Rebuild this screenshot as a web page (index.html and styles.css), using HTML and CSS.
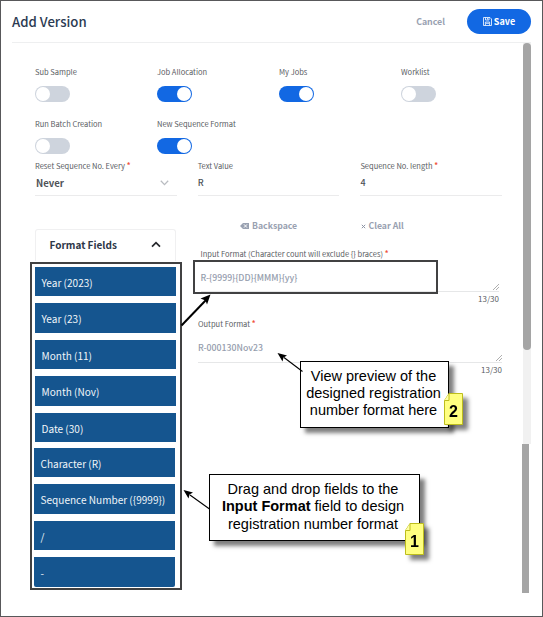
FILE: index.html
```
<!DOCTYPE html>
<html lang="en">
<head>
<meta charset="utf-8">
<title>Add Version</title>
<link rel="stylesheet" href="styles.css">
</head>
<body>
<div class="page">
  <header class="header">
    <h1 class="title">Add Version</h1>
    <div class="actions">
      <button class="cancel">Cancel</button>
      <button class="save">
        <svg class="save-icon" viewBox="0 0 9 9"><path d="M.5.5H7L8.5 2V8.5H.5ZM2.5.5V3H6V.5M4.5 1V2.5M2.4 8.4V5H6.6V8.4M3 6.3H6" fill="none" stroke="#fff" stroke-width=".8"/></svg>
        <span>Save</span>
      </button>
    </div>
  </header>

  <div class="body">
    <main class="form">
      <section class="toggles">
        <div class="toggle"><span class="label">Sub Sample</span><i class="switch"></i></div>
        <div class="toggle"><span class="label">Job Allocation</span><i class="switch on"></i></div>
        <div class="toggle"><span class="label">My Jobs</span><i class="switch on"></i></div>
        <div class="toggle"><span class="label">Worklist</span><i class="switch"></i></div>
        <div class="toggle"><span class="label">Run Batch Creation</span><i class="switch"></i></div>
        <div class="toggle"><span class="label">New Sequence Format</span><i class="switch on"></i></div>
      </section>

      <section class="fields">
        <div class="field">
          <span class="label">Reset Sequence No. Every <b class="req">*</b></span>
          <div class="value select"><span>Never</span>
            <svg class="chevron" viewBox="0 0 9 6"><path d="M.8.8 4.5 4.6 8.2.8" fill="none" stroke="#b9bcc1" stroke-width="1.3"/></svg>
          </div>
        </div>
        <div class="field">
          <span class="label">Text Value</span>
          <div class="value plain">R</div>
        </div>
        <div class="field">
          <span class="label">Sequence No. length <b class="req">*</b></span>
          <div class="value plain">4</div>
        </div>
      </section>

      <section class="designer">
        <aside class="palette">
          <div class="palette-head"><span>Format Fields</span>
            <svg class="caret" viewBox="0 0 10 7"><path d="M1 5.7 5 1.6 9 5.7" fill="none" stroke="#26282c" stroke-width="1.7"/></svg>
          </div>
          <ul class="palette-list">
            <li>Year (2023)</li>
            <li>Year (23)</li>
            <li>Month (11)</li>
            <li>Month (Nov)</li>
            <li>Date (30)</li>
            <li class="shifted first">Character (R)</li>
            <li class="shifted">Sequence Number ({9999})</li>
            <li class="shifted">/</li>
            <li class="shifted last">-</li>
          </ul>
        </aside>

        <div class="formats">
          <div class="tools">
            <span class="tool back">
              <svg class="back-icon" viewBox="0 0 9 6"><path d="M3 0H9V6H3L0 3Z" fill="#99a1b1"/><path d="M4 1.4 7 4.6M7 1.4 4 4.6" stroke="#fff" stroke-width="1"/></svg>
              <span>Backspace</span>
            </span>
            <span class="tool clear">
              <svg class="x-icon" viewBox="0 0 5 5"><path d="M.8.8 4.2 4.2M4.2.8.8 4.2" stroke="#8b93a4" stroke-width="1"/></svg>
              <span>Clear All</span>
            </span>
          </div>
          <div class="format input">
            <span class="label wide">Input Format (Character count will exclude {} braces) <b class="req">*</b></span>
            <div class="area"><span class="code">R-{9999}{DD}{MMM}{yy}</span>
              <svg class="grip" viewBox="0 0 6 6"><path d="M0 6 6 0M3 6 6 3" stroke="#8d8d8d" stroke-width=".7"/></svg>
            </div>
            <span class="count">13/30</span>
          </div>
          <div class="format output">
            <span class="label">Output Format <b class="req">*</b></span>
            <div class="area"><span class="code">R-000130Nov23</span>
              <svg class="grip" viewBox="0 0 6 6"><path d="M0 6 6 0M3 6 6 3" stroke="#8d8d8d" stroke-width=".7"/></svg>
            </div>
            <span class="count">13/30</span>
          </div>
        </div>
      </section>
    </main>
    <div class="scroll"><div class="track"><i class="thumb"></i></div><i class="thumb-lower"></i></div>
  </div>

  <div class="outline outline-fields"></div>
  <div class="outline outline-input"></div>
  <div class="callout callout-preview"><p>View preview of the</p><p>designed registration</p><p>number format here</p></div>
  <div class="callout callout-drag"><p>Drag and drop fields to the</p><p><b>Input Format</b> field to design</p><p>registration number format</p></div>
  <svg class="arrows" viewBox="0 0 543 617">
    <g stroke="#000" fill="none">
      <path d="M181.500 325.500 206 300" stroke-width="2"/>
      <path d="M302.500 371.500 284 357.500M209.500 509 190 495" stroke-width="1.1"/>
    </g>
    <path d="M210.500 294.500 207 304.500 205.500 300.500 200.500 298.500Z"/>
    <path d="M277.500 353 287 355.500 283.500 357.500 282.500 361.500Z"/>
    <path d="M183.500 490 193 492.500 189.500 494.500 188.500 498.500Z"/>
  </svg>
  <div class="note note-two"><svg viewBox="0 0 19 32"><path d="M5 .5H18.500V31.500H.5V7.500L5 .5Z" fill="#ffff80" stroke="#bdbd1c"/><path d="M5 .5V7.500H.5" fill="#ffffa8" stroke="#bdbd1c"/></svg><span>2</span></div>
  <div class="note note-one"><svg viewBox="0 0 19 32"><path d="M5 .5H18.500V31.500H.5V7.500L5 .5Z" fill="#ffff80" stroke="#bdbd1c"/><path d="M5 .5V7.500H.5" fill="#ffffa8" stroke="#bdbd1c"/></svg><span>1</span></div>
</div>
</body>
</html>
```
FILE: styles.css
```
* { box-sizing: border-box; }
body { margin: 0; background: #fff; }
h1, p, ul { margin: 0; padding: 0; }
button { border: 0; padding: 0; background: none; font-family: inherit; }
svg { display: block; flex: none; }
.page {
  position: relative;
  width: 543px;
  height: 617px;
  overflow: hidden;
  border: 1px solid #58585a;
  font-family: "Noto Sans CJK SC", "Open Sans", sans-serif;
  color: #5a5d63;
}
.header {
  display: flex;
  justify-content: space-between;
  align-items: center;
  height: 42px;
  margin: 0 11px;
  border-bottom: 1px solid #eeeff0;
}
.title { font-size: 13.200px; line-height: 20px; font-weight: 500; color: #2b3a52; }
.actions { display: flex; align-items: center; gap: 22px; }
.cancel { font-size: 8.800px; line-height: 14px; font-weight: 700; color: #99a1b1; }
.save {
  display: flex;
  align-items: center;
  justify-content: center;
  gap: 2px;
  width: 64px;
  height: 25px;
  border-radius: 13px;
  background: #1268e3;
  color: #fff;
  font-size: 9px;
  line-height: 14px;
  font-weight: 700;
}
.save-icon { width: 9px; height: 9px; }

.body { display: flex; justify-content: space-between; margin-right: 11px; }
.form { width: 468px; margin-left: 34px; }
.label { display: block; font-size: 7.500px; line-height: 12px; white-space: nowrap; }
.req { color: #f0543c; font-weight: 700; position: relative; top: -1px; }

.toggles {
  display: grid;
  grid-template-columns: repeat(4, 122px);
  row-gap: 17px;
  padding-top: 23px;
}
.toggle { height: 35px; }
.switch {
  display: block;
  width: 35px;
  height: 16px;
  margin-top: 8px;
  padding: 1px;
  border-radius: 8px;
  background: #ced4dd;
}
.switch::before {
  content: "";
  display: block;
  width: 14px;
  height: 14px;
  border-radius: 50%;
  background: #fff;
}
.switch.on { background: #1268e3; }
.switch.on::before { margin-left: auto; }

.fields { display: grid; grid-template-columns: repeat(3, 141.500px); gap: 21.200px; margin-top: 7px; }
.value {
  display: flex;
  align-items: center;
  height: 24px;
  padding-bottom: 2px;
  border-bottom: 1px solid #ebebec;
  font-size: 9px;
  line-height: 14px;
  font-weight: 500;
  color: #4e5257;
}
.select { justify-content: space-between; padding: 0 8px 2px 1px; font-weight: 700; font-size: 9.600px; }
.chevron { width: 9px; height: 6px; }

.designer { display: flex; gap: 22px; margin-top: 23px; }
.palette { width: 141px; margin-top: 10px; }
.palette-head {
  display: flex;
  align-items: center;
  justify-content: space-between;
  height: 32px;
  padding: 0 14px 2px 13.500px;
  border: 1px solid #f0f0f1;
  border-bottom: 0;
  border-radius: 3px 3px 0 0;
  font-size: 10px;
  line-height: 14px;
  font-weight: 700;
  color: #2d3748;
}
.caret { width: 10px; height: 7px; }
.palette-list { display: grid; gap: 7px; margin-top: 6px; list-style: none; }
.palette-list li {
  height: 29.400px;
  padding-left: 6.500px;
  background: #15558f;
  color: #f1f5f9;
  font-size: 10.050px;
  line-height: 31px;
  white-space: nowrap;
}
.palette-list .shifted { margin-left: -1px; margin-right: 1px; }
.palette-list .first { margin-top: -1px; }
.palette-list .last { border-radius: 0 0 2px 2px; }

.formats { width: 304px; }
.tools { display: flex; height: 14px; padding-left: 42px; color: #99a1b1; font-size: 8.700px; line-height: 14px; font-weight: 700; }
.tool { display: flex; align-items: center; gap: 3px; }
.back { width: 120.500px; }
.back-icon { width: 9px; height: 6px; }
.x-icon { width: 5px; height: 5px; }
.format { display: flex; flex-direction: column; }
.input { width: 298.500px; margin: 15px 0 0 2.500px; }
.output { margin-top: 12px; }
.area {
  display: flex;
  justify-content: space-between;
  align-items: flex-end;
  height: 32px;
  border-bottom: 1px solid #e6e7e8;
}
.output .area { height: 33px; }
.output .code { padding-bottom: 7px; }
.code { font-size: 8.750px; line-height: 14px; font-weight: 500; color: #959dad; padding-bottom: 6px; }
.grip { width: 6px; height: 6px; margin-bottom: 1px; }
.count { align-self: flex-end; font-size: 8px; line-height: 14px; }

.scroll { width: 9px; padding-left: 1px; }
.track { height: 401px; width: 8px; background: #f1f1f1; }
.thumb { display: block; width: 8px; height: 307px; border-radius: 4px; background: #a5a5a5; }
.thumb-lower { display: block; width: 7px; height: 149px; margin-left: -1px; background: #a5a5a5; }

.outline { position: absolute; border: 2px solid #414142; }
.outline-fields { left: 29px; top: 261px; width: 152px; height: 328px; }
.outline-input { left: 192px; top: 259px; width: 245px; height: 34px; }
.arrows { position: absolute; left: -1px; top: -1px; width: 543px; height: 617px; }
.callout {
  position: absolute;
  height: 67px;
  padding: 6px 3px 0 0;
  border: 1px solid #000;
  background: #fff;
  box-shadow: 5px 5px 4px rgba(0, 0, 0, .5);
  color: #000;
  font: 14.500px/17px "Liberation Sans", Arial, sans-serif;
  text-align: center;
  white-space: nowrap;
}
.callout-preview { left: 299px; top: 360px; width: 149px; padding-right: 2px; }
.callout-drag { left: 208px; top: 473px; width: 211px; }
.callout-drag p:last-child { padding-top: 1px; }
.note { position: absolute; width: 19px; height: 32px; filter: drop-shadow(5px 5px 2px rgba(0, 0, 0, .5)); }
.note svg { width: 19px; height: 32px; }
.note span {
  position: absolute;
  left: 0;
  top: 10px;
  width: 19px;
  color: #000;
  font: bold 16px/17px "Liberation Sans", Arial, sans-serif;
  text-align: center;
}
.note-two { left: 443px; top: 392px; }
.note-one { left: 404px; top: 522px; }
```
